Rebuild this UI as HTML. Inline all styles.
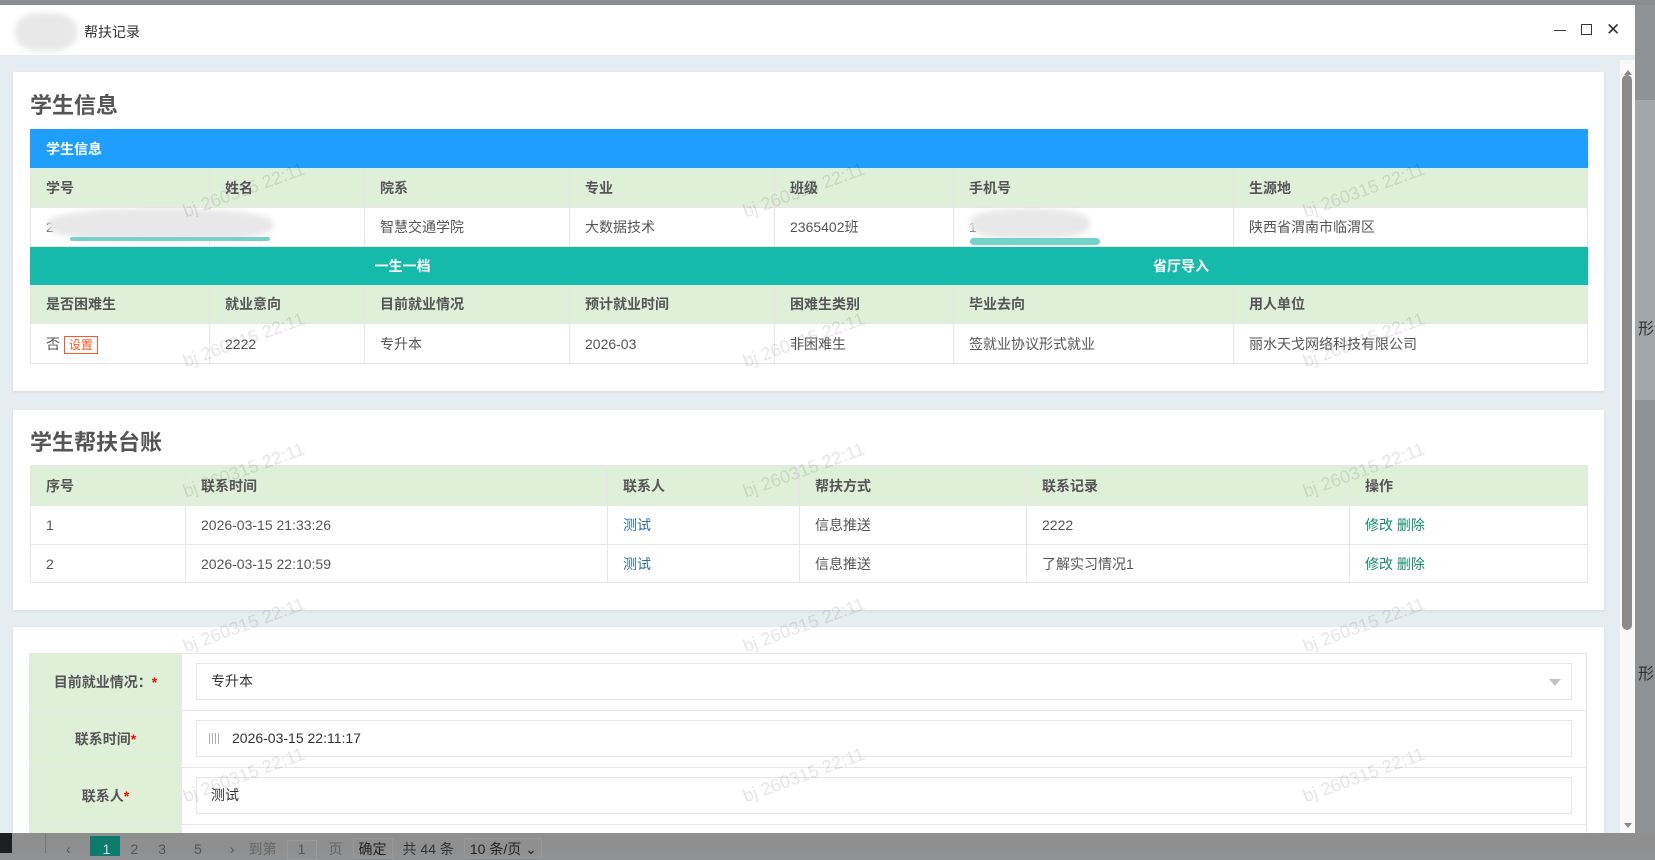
<!DOCTYPE html>
<html><head><meta charset="utf-8"><style>
*{box-sizing:border-box;margin:0;padding:0}
body{width:1655px;height:853px;overflow:hidden;background:#8e9295;font-family:"Liberation Sans","Noto Sans CJK SC",sans-serif;font-size:14px;color:#555;position:relative}
.abs{position:absolute}
.win{left:0;top:5px;width:1635px;height:828px;background:#e6edf0;overflow:hidden}
.title{left:0;top:0;width:1635px;height:50px;background:#fff}
.card{background:#fff;box-shadow:0 1px 3px rgba(0,0,0,.08)}
table{border-collapse:collapse;table-layout:fixed;position:absolute}
td{border:1px solid #e6e6e6;padding:0 15px;white-space:nowrap;overflow:hidden}
.hd td{background:#dff0d8;font-weight:bold;color:#555}
h2{position:absolute;font-size:22px;font-weight:bold;color:#555}
.wm{position:absolute;color:rgba(0,0,0,.1);font-size:18px;transform:rotate(-20deg);white-space:nowrap}
.blur{position:absolute;background:#e8e8e8;border-radius:40%;filter:blur(3px)}
.inp{position:absolute;border:1px solid #e6e6e6;background:#fff;height:37px;line-height:35px;padding-left:14px;color:#333}
.lbl{position:absolute;background:#dff0d8;font-weight:bold;text-align:center;color:#555;border-bottom:1px solid #e6e6e6}
.star{color:#f00}
.lnk{color:#128a6b}
</style></head><body>
<div class="abs" style="left:0;top:0;width:1655px;height:5px;background:#8a8e91"></div>
<div class="abs" style="left:1635px;top:100px;width:20px;height:300px;background:#a3a7a9"></div>
<div class="abs" style="left:1638px;top:315px;font-size:16px;color:#333">形</div>
<div class="abs" style="left:1638px;top:660px;font-size:16px;color:#333">形</div>
<div class="win abs">
 <div class="title abs">
  <div class="blur" style="left:15px;top:8px;width:62px;height:38px"></div>
  <div class="abs" style="left:84px;top:17px;font-size:14px;color:#333">帮扶记录</div>
  <div class="abs" style="left:1554px;top:25px;width:12px;height:1px;background:#333"></div>
  <div class="abs" style="left:1581px;top:19px;width:11px;height:11px;border:1.5px solid #333"></div>
  <div class="abs" style="left:1606px;top:18px;font-size:17px;color:#333;line-height:14px">✕</div>
 </div>
 <div class="card abs" style="left:13px;top:67px;width:1591px;height:319px"></div>
 <h2 style="left:30px;top:83px">学生信息</h2>
 <table style="left:30px;top:124px;width:1557px">
  <colgroup><col style="width:179px"><col style="width:155px"><col style="width:205px"><col style="width:205px"><col style="width:179px"><col style="width:280px"><col style="width:354px"></colgroup>
  <tr style="height:38px"><td colspan="7" style="background:#1e9fff;color:#fff;font-weight:bold;border-color:#1e9fff">学生信息</td></tr>
  <tr class="hd" style="height:40px"><td>学号</td><td>姓名</td><td>院系</td><td>专业</td><td>班级</td><td>手机号</td><td>生源地</td></tr>
  <tr style="height:39px"><td>2</td><td></td><td>智慧交通学院</td><td>大数据技术</td><td>2365402班</td><td>1</td><td>陕西省渭南市临渭区</td></tr>
  <tr style="height:38px;background:#16baaa;color:#fff;font-weight:bold;text-align:center"><td colspan="4" style="border-color:#16baaa">一生一档</td><td colspan="3" style="border-color:#16baaa">省厅导入</td></tr>
  <tr class="hd" style="height:39px"><td>是否困难生</td><td>就业意向</td><td>目前就业情况</td><td>预计就业时间</td><td>困难生类别</td><td>毕业去向</td><td>用人单位</td></tr>
  <tr style="height:40px"><td>否 <span style="border:1px solid #ff5722;color:#ff5722;font-size:12px;padding:1px 4px">设置</span></td><td>2222</td><td>专升本</td><td>2026-03</td><td>非困难生</td><td>签就业协议形式就业</td><td>丽水天戈网络科技有限公司</td></tr>
 </table>
 <div class="blur" style="left:48px;top:204px;width:225px;height:32px"></div>
 <div class="abs" style="left:70px;top:232px;width:200px;height:4px;background:#74d2c8;border-radius:3px"></div>
 <div class="blur" style="left:970px;top:204px;width:120px;height:30px"></div>
 <div class="abs" style="left:970px;top:233px;width:130px;height:7px;background:#74d2c8;border-radius:4px"></div>
 <div class="card abs" style="left:13px;top:405px;width:1591px;height:200px"></div>
 <h2 style="left:30px;top:420px">学生帮扶台账</h2>
 <table style="left:30px;top:460px;width:1557px">
  <colgroup><col style="width:155px"><col style="width:422px"><col style="width:192px"><col style="width:227px"><col style="width:323px"><col style="width:238px"></colgroup>
  <tr class="hd" style="height:40px"><td>序号</td><td>联系时间</td><td>联系人</td><td>帮扶方式</td><td>联系记录</td><td>操作</td></tr>
  <tr style="height:39px"><td>1</td><td>2026-03-15 21:33:26</td><td style="color:#2f6fa8">测试</td><td>信息推送</td><td>2222</td><td class="lnk">修改 删除</td></tr>
  <tr style="height:38px"><td>2</td><td>2026-03-15 22:10:59</td><td style="color:#2f6fa8">测试</td><td>信息推送</td><td>了解实习情况1</td><td class="lnk">修改 删除</td></tr>
 </table>
 <div class="card abs" style="left:13px;top:622px;width:1591px;height:220px"></div>
 <div class="abs" style="left:29px;top:648px;width:1558px;height:200px;border:1px solid #e6e6e6"></div>
 <div class="lbl" style="left:30px;top:649px;width:151px;height:57px;line-height:57px">目前就业情况：<span class="star">*</span></div>
 <div class="lbl" style="left:30px;top:706px;width:151px;height:57px;line-height:57px">联系时间<span class="star">*</span></div>
 <div class="lbl" style="left:30px;top:763px;width:151px;height:57px;line-height:57px">联系人<span class="star">*</span></div>
 <div class="lbl" style="left:30px;top:820px;width:151px;height:40px"></div>
 <div class="abs" style="left:181px;top:649px;width:1px;height:200px;background:#e6e6e6"></div>
 <div class="abs" style="left:182px;top:705px;width:1405px;height:1px;background:#e6e6e6"></div>
 <div class="abs" style="left:182px;top:762px;width:1405px;height:1px;background:#e6e6e6"></div>
 <div class="abs" style="left:182px;top:819px;width:1405px;height:1px;background:#e6e6e6"></div>
 <div class="inp" style="left:196px;top:658px;width:1376px">专升本<span style="position:absolute;right:10px;top:15px;border:6px solid transparent;border-top:7px solid #c2c2c2;border-bottom:0"></span></div>
 <div class="inp" style="left:196px;top:715px;width:1376px;padding-left:35px"><span style="position:absolute;left:12px;top:12px;width:11px;height:11px;background:repeating-linear-gradient(90deg,#888 0 1px,transparent 1px 3px),#fff;opacity:.7"></span>2026-03-15 22:11:17</div>
 <div class="inp" style="left:196px;top:772px;width:1376px">测试</div>
 <div class="abs" style="left:1620px;top:55px;width:15px;height:773px;background:#f8f8f8"></div>
 <div class="abs" style="left:1624px;top:65px;border:4px solid transparent;border-bottom:5px solid #888;border-top:0"></div>
 <div class="abs" style="left:1622px;top:70px;width:10px;height:555px;background:#8a8a8a;border-radius:5px"></div>
 <div class="abs" style="left:1624px;top:818px;border:4px solid transparent;border-top:5px solid #888;border-bottom:0"></div>
 <div class="wm" style="left:180px;top:175px">bj 260315 22:11</div>
 <div class="wm" style="left:740px;top:175px">bj 260315 22:11</div>
 <div class="wm" style="left:1300px;top:175px">bj 260315 22:11</div>
 <div class="wm" style="left:180px;top:325px">bj 260315 22:11</div>
 <div class="wm" style="left:740px;top:325px">bj 260315 22:11</div>
 <div class="wm" style="left:1300px;top:325px">bj 260315 22:11</div>
 <div class="wm" style="left:180px;top:455px">bj 260315 22:11</div>
 <div class="wm" style="left:740px;top:455px">bj 260315 22:11</div>
 <div class="wm" style="left:1300px;top:455px">bj 260315 22:11</div>
 <div class="wm" style="left:180px;top:610px">bj 260315 22:11</div>
 <div class="wm" style="left:740px;top:610px">bj 260315 22:11</div>
 <div class="wm" style="left:1300px;top:610px">bj 260315 22:11</div>
 <div class="wm" style="left:180px;top:760px">bj 260315 22:11</div>
 <div class="wm" style="left:740px;top:760px">bj 260315 22:11</div>
 <div class="wm" style="left:1300px;top:760px">bj 260315 22:11</div>
</div>
<div class="abs" style="left:0;top:833px;width:1655px;height:20px;background:#8f8f8f"></div>
<div class="abs" style="left:0;top:833px;width:12px;height:20px;background:#1d1f21"></div>
<div class="abs" style="left:45px;top:833px;width:1px;height:20px;background:#777"></div>
<div class="abs" style="left:90px;top:836px;width:30px;height:20px;background:#0e7b6c"></div>
<div class="abs" style="left:66px;top:838px;font-size:14px;color:#555;white-space:nowrap;word-spacing:0">‹<span style="margin-left:32px;color:#cde">1</span><span style="margin-left:20px">2</span><span style="margin-left:20px">3</span><span style="margin-left:28px">5</span><span style="margin-left:28px">›</span><span style="margin-left:14px;color:#666">到第</span><span style="display:inline-block;width:30px;height:20px;border:1px solid #999;margin-left:10px;text-align:center">1</span><span style="margin-left:12px;color:#666">页</span><span style="display:inline-block;width:40px;height:20px;border:1px solid #999;margin-left:10px;text-align:center;color:#222">确定</span><span style="margin-left:10px;color:#333">共 44 条</span><span style="display:inline-block;width:78px;height:20px;border:1px solid #999;margin-left:10px;padding-left:5px;color:#222">10 条/页 ⌄</span></div>
</body></html>
